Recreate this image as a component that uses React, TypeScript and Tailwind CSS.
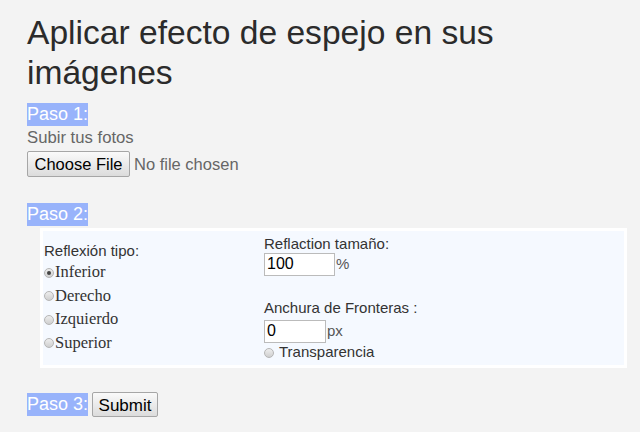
import React from "react";

const sans = "font-['Liberation_Sans',Arial,sans-serif]";
const serif = "font-['Liberation_Serif','Times_New_Roman',serif]";

function StepLabel({ children }: { children: React.ReactNode }) {
	return (
		<span className="inline-block h-[23px] bg-[#98b3fb] text-[18px] leading-[23px] text-white">
			{children}
		</span>
	);
}

function Radio({ checked = false }: { checked?: boolean }) {
	return (
		<span className="inline-flex h-[10px] w-[10px] shrink-0 items-center justify-center rounded-full border border-[#b5b5b5] bg-gradient-to-b from-[#eeeeee] to-[#cfcfcf]">
			{checked && <span className="h-[4px] w-[4px] rounded-full bg-[#444]" />}
		</span>
	);
}

function GreyButton({ children, className = "" }: { children: React.ReactNode; className?: string }) {
	return (
		<button
			type="button"
			className={`rounded-[2px] border border-[#a6a6a6] bg-gradient-to-b from-[#fafafa] to-[#dcdcdc] text-[16.5px] text-black ${className}`}
		>
			{children}
		</button>
	);
}

export default function App() {
	const tipos = [
		{ label: "Inferior", checked: true },
		{ label: "Derecho" },
		{ label: "Izquierdo" },
		{ label: "Superior" },
	];

	return (
		<div className={`min-h-[432px] bg-[#f3f3f3] pl-[27px] pr-[13px] pt-[13px] ${sans}`}>
			<h1 className="text-[33.6px] leading-[40px] text-[#2b2b2b]">
				Aplicar efecto de espejo en sus imágenes
			</h1>

			<div className="mt-[10px]">
				<StepLabel>Paso 1:</StepLabel>
			</div>
			<p className="text-[16.7px] leading-[22px] text-[#666]">Subir tus fotos</p>
			<div className="mt-[2px] flex items-center gap-[4px]">
				<GreyButton className="h-[26px] w-[103px]">Choose File</GreyButton>
				<span className="text-[16.5px] text-[#666]">No file chosen</span>
			</div>

			<div className="mt-[26px]">
				<StepLabel>Paso 2:</StepLabel>
			</div>
			<div className="mt-[1px] ml-[13px] flex h-[140px] items-center border-[3px] border-white bg-[#f5f9ff] pl-[1px]">
				<div className="w-[220px]">
					<div className="text-[15px] leading-[20px] text-[#333]">Reflexión tipo:</div>
					{tipos.map((t) => (
						<div key={t.label} className={`flex h-[23.5px] items-center gap-[1px] text-[16.5px] text-[#333] ${serif}`}>
							<Radio checked={t.checked} />
							<span>{t.label}</span>
						</div>
					))}
				</div>
				<div className="text-[15px] text-[#333]">
					<div className="leading-[19px]">Reflaction tamaño:</div>
					<div className="flex items-center">
						<span className="flex h-[23px] w-[71px] items-center border border-[#bbbbbb] bg-white pl-[2px] text-[16px] text-black">
							100
						</span>
						<span className="ml-[1px] text-[#555]">%</span>
					</div>
					<div className="h-[22px]" />
					<div className="leading-[20px]">Anchura de Fronteras :</div>
					<div className="mt-[2px] flex items-center">
						<span className="flex h-[23px] w-[62px] items-center border border-[#bbbbbb] bg-white pl-[2px] text-[16px] text-black">
							0
						</span>
						<span className="ml-[1px] text-[#555]">px</span>
					</div>
					<div className="flex h-[20px] items-center gap-[5px]">
						<Radio />
						<span>Transparencia</span>
					</div>
				</div>
			</div>

			<div className="mt-[24px] flex items-center gap-[4px]">
				<StepLabel>Paso 3:</StepLabel>
				<GreyButton className="h-[25px] w-[66px] text-[17px]">Submit</GreyButton>
			</div>
		</div>
	);
}
